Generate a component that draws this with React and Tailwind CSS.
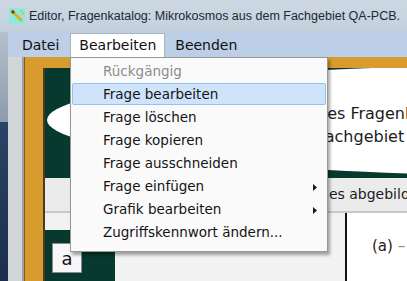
const items = [
  { label: "Rückgängig", disabled: true },
  { label: "Frage bearbeiten", active: true },
  { label: "Frage löschen" },
  { label: "Frage kopieren" },
  { label: "Frage ausschneiden" },
  { label: "Frage einfügen", sub: true },
  { label: "Grafik bearbeiten", sub: true },
  { label: "Zugriffskennwort ändern..." },
];

function AppIcon() {
  return (
    <svg width="16" height="16" viewBox="0 0 16 16" className="shrink-0">
      <rect x="0" y="0" width="16" height="16" fill="#8fe8dc" />
      <path d="M3 3 L12 12" stroke="#d8b020" strokeWidth="3" strokeLinecap="round" />
      <path d="M3 3 L5 5" stroke="#5a4a20" strokeWidth="3" />
      <path d="M12 4 L13 2 M13 6 L15 5" stroke="#d8b020" strokeWidth="1.2" />
    </svg>
  );
}

function Arrow() {
  return (
    <svg width="4" height="7" viewBox="0 0 4 7" className="absolute right-[10px] top-[9px]">
      <path d="M0 0 L4 3.5 L0 7 Z" fill="#1a1a1a" />
    </svg>
  );
}

export default function App() {
  return (
    <div
      className="relative w-[407px] h-[281px] overflow-hidden bg-[#c7d2de] flex flex-col"
      style={{ fontFamily: '"DejaVu Sans", sans-serif' }}
    >
      {/* title bar */}
      <div className="h-[32px] flex items-center pl-[9px] bg-gradient-to-b from-[#cdd8e3] to-[#c3d0dc] shrink-0 overflow-hidden">
        <AppIcon />
        <span
          className="ml-[4px] text-[12.5px] text-[#1b2838] whitespace-nowrap"
          style={{ fontFamily: '"Liberation Sans", sans-serif' }}
        >
          Editor, Fragenkatalog: Mikrokosmos aus dem Fachgebiet QA-PCB.
        </span>
      </div>

      <div className="flex flex-1 min-h-0">
        {/* window frame left */}
        <div className="w-[8px] shrink-0 flex flex-col">
          <div className="h-[90px] bg-gradient-to-b from-[#b4c0cc] to-[#8c9bad]" />
          <div className="flex-1 bg-gradient-to-b from-[#2c4466] to-[#1b2e4c]" />
        </div>

        <div className="flex-1 flex flex-col min-w-0">
          {/* menu bar */}
          <div className="h-[25px] bg-[#bccfe6] flex items-end text-[14px] text-[#111] shrink-0">
            <div className="h-[24px] flex items-center pl-[14px] pr-[11px]">Datei</div>
            <div className="h-[24px] flex items-center px-[8px] bg-white border-x border-t border-[#a9b3bd]">
              Bearbeiten
            </div>
            <div className="h-[24px] flex items-center px-[10px]">Beenden</div>
          </div>

          {/* client area */}
          <div className="flex-1 flex min-h-0 min-w-0 bg-[#d3d6d9]">
            <div className="w-[14px] shrink-0" />
            <div className="w-[2px] shrink-0 bg-[#9c9fa3]" />
            <div className="flex-1 min-w-0 overflow-hidden bg-[#d89b2e] border-l border-[#8a5a1a] pl-[18px] pt-[11px] flex flex-col">
              <div className="flex-1 flex flex-col border-l-2 border-[#4a3a20] bg-[#f2f2f2]">
                {/* banner */}
                <div className="relative h-[110px] bg-[#07392f] shrink-0">
                  <svg className="absolute inset-0" width="362" height="110">
                    <ellipse cx="517" cy="52" rx="515" ry="56" fill="#ffffff" />
                  </svg>
                  <div className="relative pl-[272px] pt-[34px] text-[16px] leading-[23px] text-[#1c1c1c] whitespace-nowrap">
                    <div>des Fragenkatalogs</div>
                    <div>Fachgebiet QA-PCB</div>
                  </div>
                </div>

                {/* question band */}
                <div className="h-[35px] bg-[#ebebeb] border-b-2 border-[#c9c9c9] pl-[275px] flex items-center text-[14px] text-[#1c1c1c] whitespace-nowrap shrink-0">
                  des abgebildeten Bauteils
                </div>

                {/* answers */}
                <div className="flex-1 flex min-h-0">
                  <div className="w-[302px] shrink-0 pt-[17px] flex border-r-2 border-[#111]">
                    <div className="w-[70px] bg-[#07392f] pl-[7px] pt-[13px]">
                      <div className="w-[30px] h-[30px] bg-[#f7f7f7] border border-[#8a8a8a] flex items-center justify-center text-[18px] text-[#111]">
                        a
                      </div>
                    </div>
                  </div>
                  <div className="flex-1 bg-white pl-[25px] pt-[22px] text-[15px] text-[#222] whitespace-nowrap">
                    (a) <span className="text-[#888]">–</span>
                  </div>
                </div>
              </div>
            </div>
          </div>
        </div>
      </div>

      {/* dropdown menu */}
      <div className="absolute left-[70px] top-[57px] w-[258px] h-[195px] bg-[#fafafa] border border-[#979797] shadow-[2px_3px_3px_rgba(0,0,0,0.35)] pt-[2px] text-[13.5px]">
        {items.map((it) => (
          <div key={it.label} className="relative h-[23px] px-[1px]">
            <div
              className={
                "h-[22px] flex items-center pl-[30px] whitespace-nowrap rounded-[2px] " +
                (it.active ? "bg-[#cfe4fb] border border-[#8fc1f3] " : "border border-transparent ") +
                (it.disabled ? "text-[#8c8c8c]" : "text-[#141414]")
              }
            >
              {it.label}
            </div>
            {it.sub && <Arrow />}
          </div>
        ))}
      </div>
    </div>
  );
}
